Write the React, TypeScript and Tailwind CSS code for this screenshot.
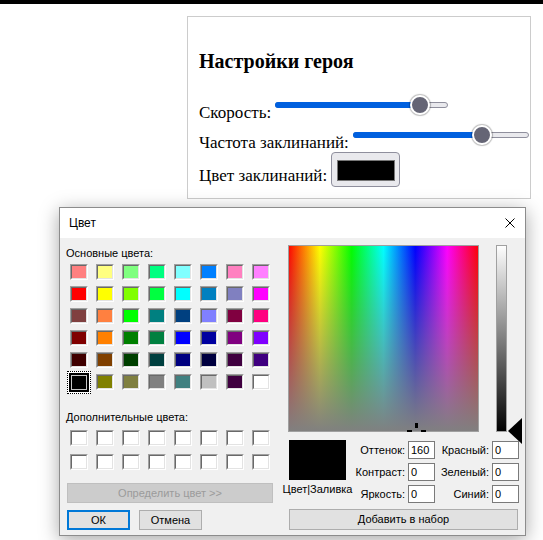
import React from "react";

const basicColors = [
  ["bg-[#ff8080]", "bg-[#ffff80]", "bg-[#80ff80]", "bg-[#00ff80]", "bg-[#80ffff]", "bg-[#0080ff]", "bg-[#ff80c0]", "bg-[#ff80ff]"],
  ["bg-[#ff0000]", "bg-[#ffff00]", "bg-[#80ff00]", "bg-[#00ff40]", "bg-[#00ffff]", "bg-[#0080c0]", "bg-[#8080c0]", "bg-[#ff00ff]"],
  ["bg-[#804040]", "bg-[#ff8040]", "bg-[#00ff00]", "bg-[#008080]", "bg-[#004080]", "bg-[#8080ff]", "bg-[#800040]", "bg-[#ff0080]"],
  ["bg-[#800000]", "bg-[#ff8000]", "bg-[#008000]", "bg-[#008040]", "bg-[#0000ff]", "bg-[#0000a0]", "bg-[#800080]", "bg-[#8000ff]"],
  ["bg-[#400000]", "bg-[#804000]", "bg-[#004000]", "bg-[#004040]", "bg-[#000080]", "bg-[#000040]", "bg-[#400040]", "bg-[#400080]"],
  ["bg-black", "bg-[#808000]", "bg-[#808040]", "bg-[#808080]", "bg-[#408080]", "bg-[#c0c0c0]", "bg-[#400040]", "bg-white"],
];

function Swatch({ color }: { color: string }) {
  return (
    <div className="h-[16px] w-[18px] border border-t-[#a0a0a0] border-l-[#a0a0a0] border-b-white border-r-white">
      <div className={`h-full w-full border border-t-[#696969] border-l-[#696969] border-b-[#e3e3e3] border-r-[#e3e3e3] ${color}`} />
    </div>
  );
}

function SelectedSwatch() {
  return (
    <div className="relative h-[16px] w-[18px]">
      <div className="absolute -left-[3px] -top-[3px] h-[23px] w-[24px] border border-dotted border-black bg-white p-[1px]">
        <div className="h-full w-full border-2 border-black">
          <div className="h-full w-full border border-[#c8c8c8] bg-black" />
        </div>
      </div>
    </div>
  );
}

function Slider({ className, pos }: { className: string; pos: number }) {
  return (
    <div className={`relative h-[20px] shrink-0 ${className}`}>
      <div className="absolute left-0 right-0 top-[7px] h-[6px] rounded-full border border-[#8f8f9d] bg-[#e9e9ed]" />
      <div className="absolute left-0 top-[7px] h-[6px] rounded-full bg-[#0060df]" style={{ width: pos }} />
      <div
        className="absolute top-0 h-[20px] w-[20px] rounded-full border-2 border-white bg-[#656575] shadow-[0_0_1px_1px_rgba(0,0,0,0.25)]"
        style={{ left: pos - 10 }}
      />
    </div>
  );
}

function WinButton({ className, children }: { className: string; children: React.ReactNode }) {
  return (
    <div className={`flex items-center justify-center border border-[#adadad] bg-[#e1e1e1] ${className}`}>
      {children}
    </div>
  );
}

function Field({ label, value }: { label: string; value: string }) {
  return (
    <>
      <span className="pr-[3px] text-right leading-[18px]">{label}</span>
      <div className="h-[18px] border border-[#7a7a7a] bg-white pl-[2px] leading-[16px]">{value}</div>
    </>
  );
}

export default function App() {
  return (
    <div className="relative h-[540px] w-[543px] overflow-hidden bg-white font-['Liberation_Serif',serif] text-black">
      <div className="h-[4px] bg-black" />

      <div className="ml-[187px] mt-[12px] w-[344px] border border-[#cccccc] px-[11px] pb-[11px] pt-[33px]">
        <h3 className="text-[20px] font-bold leading-[22px]">Настройки героя</h3>
        <div className="mt-[22px] flex h-[30px] items-start gap-[4px] text-[17px] leading-[18px]">
          <span className="mt-[10px]">Скорость:</span>
          <Slider className="mt-[1px] w-[173px]" pos={145} />
        </div>
        <div className="flex h-[28px] items-start gap-[4px] text-[17px] leading-[18px]">
          <span className="mt-[10px] whitespace-nowrap">Частота заклинаний:</span>
          <Slider className="mt-[1px] w-[176px]" pos={129} />
        </div>
        <div className="flex h-[35px] items-start gap-[4px] text-[17px] leading-[18px]">
          <span className="mt-[15px] whitespace-nowrap">Цвет заклинаний:</span>
          <div className="flex h-[35px] w-[69px] items-center justify-center rounded-[4px] border border-[#8f8f9d] bg-[#e9e9ed]">
            <div className="mt-[2px] h-[21px] w-[58px] border border-[#777777] bg-black" />
          </div>
        </div>
      </div>

      <div className="absolute left-[59px] top-[207px] h-[329px] w-[467px] border border-[#8c8c8c] bg-[#f0f0f0] font-['Liberation_Sans',Arial,sans-serif] text-[11px] leading-[13px] shadow-[0_4px_18px_rgba(0,0,0,0.35)]">
        <div className="flex h-[30px] items-center justify-between bg-white pl-[9px] pr-[10px] text-[12px]">
          <span>Цвет</span>
          <svg width="10" height="10" viewBox="0 0 10 10">
            <path d="M0.5 0.5 L9.5 9.5 M9.5 0.5 L0.5 9.5" stroke="#000" strokeWidth="1" />
          </svg>
        </div>

        <div className="flex">
          <div className="flex w-[228px] flex-col">
            <span className="ml-[6px] mt-[9px]">Основные цвета:</span>
            <div className="ml-[10px] mt-[4px] grid w-max grid-cols-8 gap-x-[8px] gap-y-[6px]">
              {basicColors.flatMap((row, r) =>
                row.map((c, i) =>
                  r === 5 && i === 0 ? <SelectedSwatch key={`${r}-${i}`} /> : <Swatch key={`${r}-${i}`} color={c} />
                )
              )}
            </div>
            <span className="ml-[6px] mt-[21px]">Дополнительные цвета:</span>
            <div className="ml-[10px] mt-[6px] grid w-max grid-cols-8 gap-x-[8px] gap-y-[8px]">
              {Array.from({ length: 16 }).map((_, i) => (
                <Swatch key={i} color="bg-white" />
              ))}
            </div>
            <div className="ml-[7px] mt-[13px] flex h-[20px] w-[206px] items-center justify-center border border-[#bfbfbf] bg-[#cccccc] text-[#9b9b9b]">
              Определить цвет &gt;&gt;
            </div>
            <div className="ml-[7px] mt-[7px] flex gap-[9px]">
              <div className="flex h-[20px] w-[63px] items-center justify-center border-2 border-[#0078d7] bg-[#e1e1e1]">ОК</div>
              <WinButton className="h-[20px] w-[63px]">Отмена</WinButton>
            </div>
          </div>

          <div className="flex flex-col">
            <div className="mt-[7px] flex">
              <svg width="191" height="187" viewBox="0 0 191 187" className="block">
                <defs>
                  <linearGradient id="hue" x1="0" y1="0" x2="1" y2="0">
                    <stop offset="0" stopColor="#ff0000" />
                    <stop offset="0.1667" stopColor="#ffff00" />
                    <stop offset="0.3333" stopColor="#00ff00" />
                    <stop offset="0.5" stopColor="#00ffff" />
                    <stop offset="0.6667" stopColor="#0000ff" />
                    <stop offset="0.8333" stopColor="#ff00ff" />
                    <stop offset="1" stopColor="#ff0000" />
                  </linearGradient>
                  <linearGradient id="sat" x1="0" y1="0" x2="0" y2="1">
                    <stop offset="0" stopColor="#808080" stopOpacity="0" />
                    <stop offset="1" stopColor="#808080" stopOpacity="1" />
                  </linearGradient>
                  <linearGradient id="lum" x1="0" y1="0" x2="0" y2="1">
                    <stop offset="0" stopColor="#ffffff" />
                    <stop offset="1" stopColor="#000000" />
                  </linearGradient>
                </defs>
                <rect x="0" y="0" width="191" height="187" fill="url(#hue)" />
                <rect x="0" y="0" width="191" height="187" fill="url(#sat)" />
                <rect x="0.5" y="0.5" width="190" height="186" fill="none" stroke="#a0a0a0" />
                <rect x="127" y="178" width="3" height="5" fill="#000" />
                <rect x="119" y="185" width="5" height="2" fill="#000" />
                <rect x="133" y="185" width="5" height="2" fill="#000" />
              </svg>
              <div className="relative ml-[17px]">
                <svg width="11" height="187" viewBox="0 0 11 187" className="block">
                  <rect x="0" y="0" width="11" height="187" fill="url(#lum)" />
                  <rect x="0.5" y="0.5" width="10" height="186" fill="none" stroke="#a0a0a0" />
                </svg>
                <svg width="15" height="26" viewBox="0 0 15 26" className="absolute left-[12px] top-[173px]">
                  <path d="M14 0 L0 13 L14 26 Z" fill="#000" />
                </svg>
              </div>
            </div>

            <div className="mt-[8px] flex items-start">
              <div className="ml-[1px] flex w-[57px] flex-col items-center">
                <div className="h-[40px] w-[57px] bg-black" />
                <span className="mt-[3px] whitespace-nowrap">Цвет|Заливка</span>
              </div>
              <div className="mt-[1px] grid grid-cols-[62px_27px_57px_27px] gap-y-[4px]">
                <Field label="Оттенок:" value="160" />
                <Field label="Красный:" value="0" />
                <Field label="Контраст:" value="0" />
                <Field label="Зеленый:" value="0" />
                <Field label="Яркость:" value="0" />
                <Field label="Синий:" value="0" />
              </div>
            </div>

            <WinButton className="ml-[1px] mt-[6px] h-[21px] w-[229px]">Добавить в набор</WinButton>
          </div>
        </div>
      </div>
    </div>
  );
}
